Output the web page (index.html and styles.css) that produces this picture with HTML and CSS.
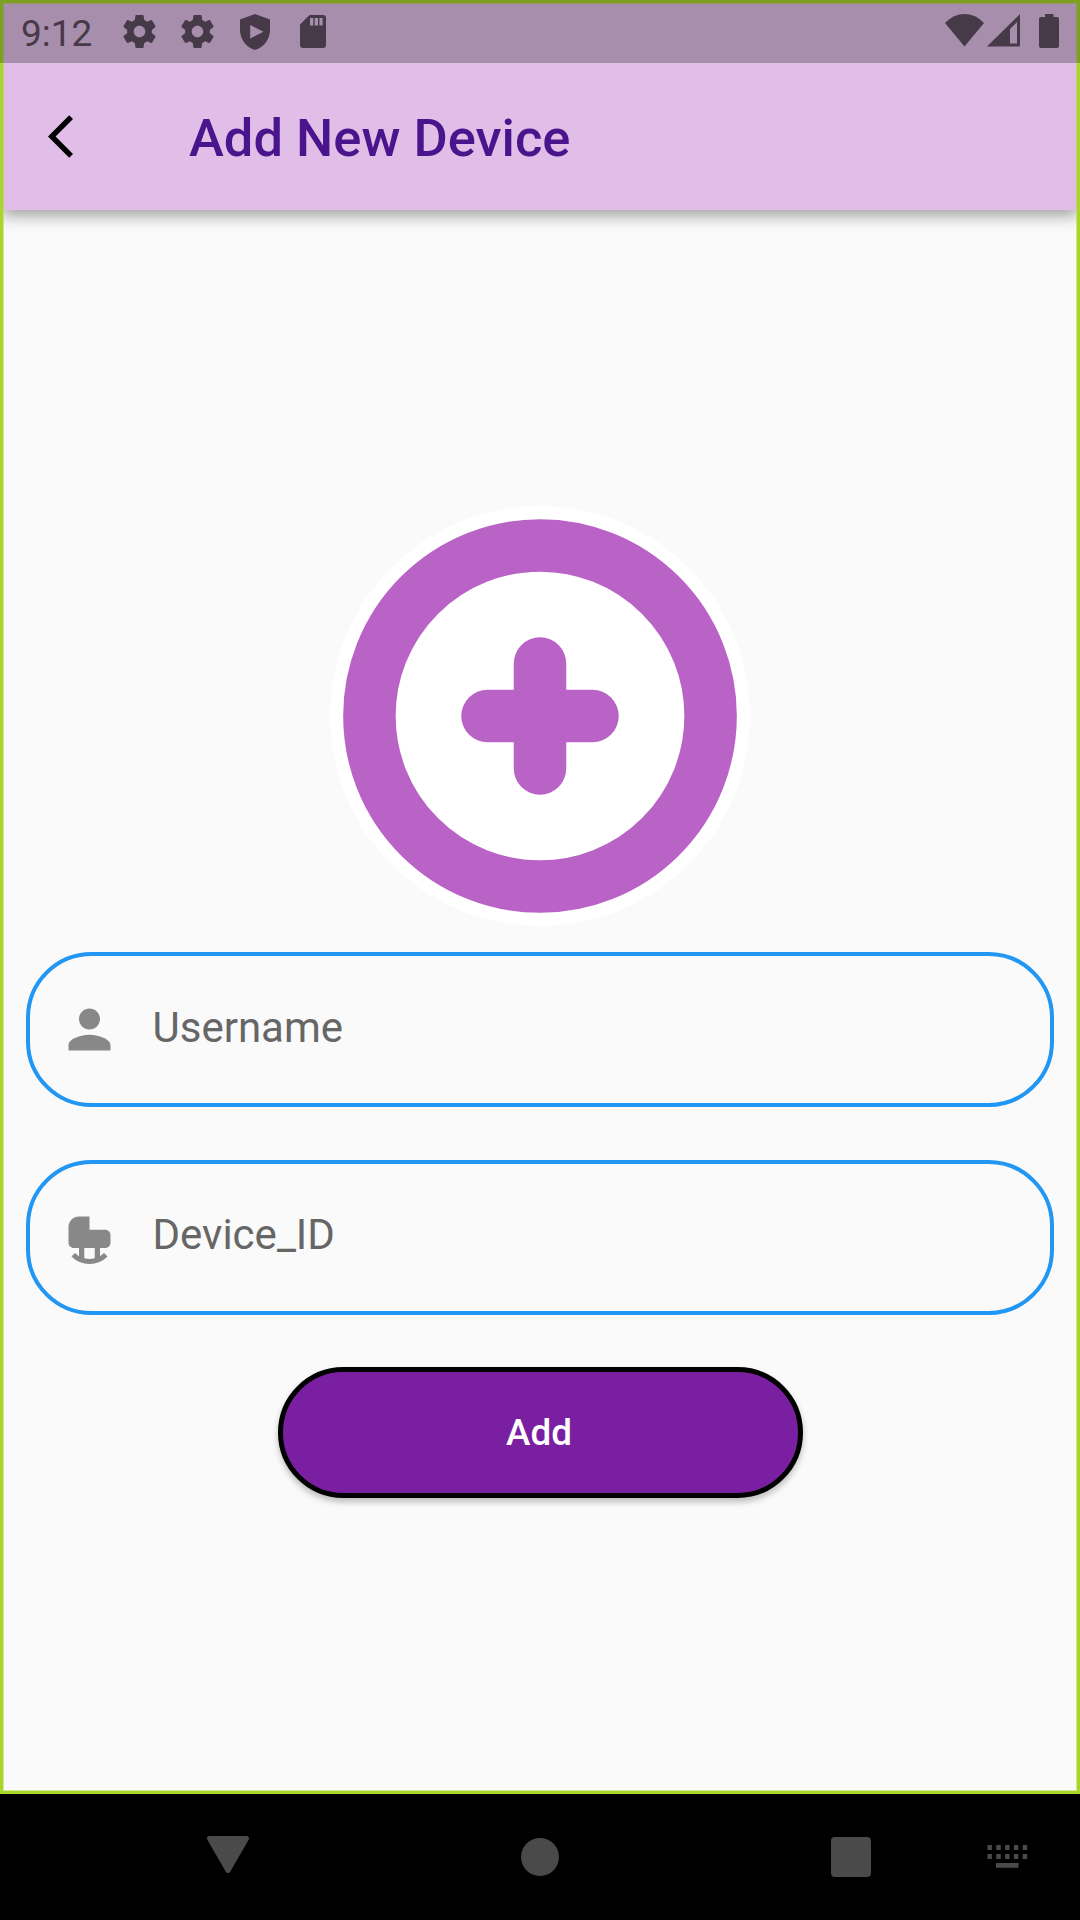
FILE: index.html
```
<!DOCTYPE html>
<html lang="en">
<head>
<meta charset="utf-8">
<title>Add New Device</title>
<link rel="stylesheet" href="styles.css">
</head>
<body>
<div class="screen">
  <div class="app">
    <header class="top">
      <div class="status">
        <span class="clock">9:12</span>
        <div class="notices">
          <svg width="33" height="33" viewBox="2 2 20 20"><path d="M19.43 12.98c.04-.32.07-.64.07-.98s-.03-.66-.07-.98l2.11-1.65c.19-.15.24-.42.12-.64l-2-3.46c-.12-.22-.39-.3-.61-.22l-2.49 1c-.52-.4-1.08-.73-1.69-.98l-.38-2.65C14.46 2.18 14.25 2 14 2h-4c-.25 0-.46.18-.49.42l-.38 2.65c-.61.25-1.17.59-1.69.98l-2.49-1c-.23-.09-.49 0-.61.22l-2 3.46c-.13.22-.07.49.12.64l2.11 1.65c-.04.32-.07.65-.07.98s.03.66.07.98l-2.11 1.65c-.19.15-.24.42-.12.64l2 3.46c.12.22.39.3.61.22l2.49-1c.52.4 1.08.73 1.69.98l.38 2.65c.03.24.24.42.49.42h4c.25 0 .46-.18.49-.42l.38-2.65c.61-.25 1.17-.59 1.69-.98l2.49 1c.23.09.49 0 .61-.22l2-3.46c.12-.22.07-.49-.12-.64l-2.11-1.65zM12 15.5c-1.93 0-3.5-1.57-3.5-3.5s1.57-3.5 3.5-3.5 3.5 1.57 3.5 3.5-1.57 3.5-3.5 3.5z"/></svg>
          <svg width="33" height="33" viewBox="2 2 20 20"><path d="M19.43 12.98c.04-.32.07-.64.07-.98s-.03-.66-.07-.98l2.11-1.65c.19-.15.24-.42.12-.64l-2-3.46c-.12-.22-.39-.3-.61-.22l-2.49 1c-.52-.4-1.08-.73-1.69-.98l-.38-2.65C14.46 2.18 14.25 2 14 2h-4c-.25 0-.46.18-.49.42l-.38 2.65c-.61.25-1.17.59-1.69.98l-2.49-1c-.23-.09-.49 0-.61.22l-2 3.46c-.13.22-.07.49.12.64l2.11 1.65c-.04.32-.07.65-.07.98s.03.66.07.98l-2.11 1.65c-.19.15-.24.42-.12.64l2 3.46c.12.22.39.3.61.22l2.49-1c.52.4 1.08.73 1.69.98l.38 2.65c.03.24.24.42.49.42h4c.25 0 .46-.18.49-.42l.38-2.65c.61-.25 1.17-.59 1.69-.98l2.49 1c.23.09.49 0 .61-.22l2-3.46c.12-.22.07-.49-.12-.64l-2.11-1.65zM12 15.5c-1.93 0-3.5-1.57-3.5-3.5s1.57-3.5 3.5-3.5 3.5 1.57 3.5 3.5-1.57 3.5-3.5 3.5z"/></svg>
          <svg width="30" height="36" viewBox="0 0 30 36"><path fill-rule="evenodd" d="M15 0 30 5.500V16C30 25 24 33.500 15 36 6 33.500 0 25 0 16V5.500zM10.200 11v13.500L23.500 17.700z"/></svg>
          <svg width="26" height="33" viewBox="0 0 26 33"><path fill-rule="evenodd" d="M9.500 0H23a3 3 0 0 1 3 3v27a3 3 0 0 1-3 3H3a3 3 0 0 1-3-3V9.500zM10 3v7.500h3.300V3zM14.700 3v7.500H18V3zM19.400 3v7.500h3.200V3z"/></svg>
        </div>
        <div class="signals">
          <svg width="39" height="33" viewBox="0 0 39 33"><path d="M0 9Q8.500 0 19.500 0T39 9L19.500 32.500z"/></svg>
          <svg class="cell" width="33" height="33" viewBox="0 0 33 33"><path fill-rule="evenodd" d="M33 0V32.500H0zM30 8 23 15V29.500h7z"/></svg>
          <svg class="battery" width="20" height="34" viewBox="0 0 20 34"><path d="M6 0h8.500v3H18a2 2 0 0 1 2 2v27a2 2 0 0 1-2 2H2a2 2 0 0 1-2-2V5a2 2 0 0 1 2-2h4z"/></svg>
        </div>
      </div>
      <div class="bar">
        <svg class="back" width="25" height="43" viewBox="0 2.1 11.67 19.8"><path d="M11.670 3.870 9.900 2.100 0 12l9.900 9.900 1.770-1.770L3.540 12z"/></svg>
        <h1 class="title">Add New Device</h1>
      </div>
    </header>
    <main class="content">
      <svg class="hero" width="420" height="420" viewBox="0 0 420 420">
        <circle cx="210" cy="210" r="210" fill="#fff"/>
        <circle cx="210" cy="210" r="170.600" fill="none" stroke="#b963c6" stroke-width="52.500"/>
        <path d="M210 157.500v105M157.500 210h105" stroke="#b963c6" stroke-width="52.500" stroke-linecap="round"/>
      </svg>
      <div class="field">
        <svg width="63" height="63" viewBox="0 0 24 24"><path d="M12 12c2.210 0 4-1.790 4-4s-1.790-4-4-4-4 1.790-4 4 1.790 4 4 4zm0 2c-2.670 0-8 1.340-8 4v2h16v-2c0-2.660-5.330-4-8-4z"/></svg>
        <span class="label">Username</span>
      </div>
      <div class="field">
        <svg width="63" height="63" viewBox="0 0 24 24"><path d="M12 9V4H8C5.790 4 4 5.790 4 8v6c0 1.100.9 2 2 2h2v4h2v-4h4v4h2v-4h2c1.100 0 2-.9 2-2v-3c0-1.100-.9-2-2-2z"/><path d="M5.800 18.600A8.800 8.800 0 0 0 18.200 18.600" fill="none" stroke="#888" stroke-width="1.900"/></svg>
        <span class="label">Device_ID</span>
      </div>
      <button class="add">Add</button>
    </main>
    <div class="frame"></div>
    <div class="scrim"></div>
  </div>
  <nav class="nav">
    <svg class="down" width="42" height="37" viewBox="0 0 42 37"><path d="M2.500 2.500h37L21 34.500z" stroke="#4a4a4a" stroke-width="5" stroke-linejoin="round"/></svg>
    <svg width="38" height="38" viewBox="0 0 38 38"><circle cx="19" cy="19" r="19"/></svg>
    <svg width="40" height="40" viewBox="0 0 40 40"><rect width="40" height="40" rx="4"/></svg>
    <svg class="keys" width="41" height="24" viewBox="0 0 41 24"><path d="M.5 0h4.400v5H.5zM9.300 0h4.400v5H9.300zM18.100 0h4.400v5h-4.400zM26.900 0h4.400v5h-4.400zM35.700 0h4.400v5h-4.400zM.5 9h4.400v5H.5zM9.300 9h4.400v5H9.300zM18.100 9h4.400v5h-4.400zM26.900 9h4.400v5h-4.400zM35.700 9h4.400v5h-4.400zM9 18h22.500v4.800H9z"/></svg>
  </nav>
</div>
</body>
</html>
```
FILE: styles.css
```
* { box-sizing: border-box; }
body {
  margin: 0;
  font-family: Roboto, sans-serif;
}
svg { display: block; flex: none; }
.screen {
  width: 1080px;
  height: 1920px;
  display: flex;
  flex-direction: column;
  background: #000;
}
.app {
  position: relative;
  height: 1794px;
  display: flex;
  flex-direction: column;
  background: #fafafa;
  overflow: hidden;
}
.top {
  height: 210px;
  background: #e1bee7;
  box-shadow: 0 8px 13px -2px rgba(0, 0, 0, .24), 0 4px 20px -2px rgba(0, 0, 0, .18);
}
.status {
  position: relative;
  z-index: 2;
  height: 63px;
  display: flex;
  padding: 0 21px 0 21px;
  color: #473a48;
  fill: #473a48;
}
.clock {
  width: 89px;
  padding-top: 12px;
  font-size: 37px;
  line-height: 44px;
}
.notices {
  display: grid;
  grid-template-columns: repeat(4, 58px);
  justify-items: center;
  align-items: center;
}
.signals {
  margin-left: auto;
  padding-top: 14px;
  display: flex;
}
.cell { margin-left: 3px; }
.battery { margin-left: 19px; }
.bar {
  height: 147px;
  display: flex;
  align-items: center;
  padding-left: 48px;
}
.title {
  margin: 2px 0 0 116px;
  color: #4a148c;
  font-size: 52.5px;
  font-weight: 500;
  line-height: 62px;
}
.content {
  flex: 1;
  display: flex;
  flex-direction: column;
  align-items: center;
  padding: 296px 26px 0;
}
.hero { margin-bottom: 26px; }
.field {
  width: 1028px;
  height: 155px;
  margin-bottom: 53px;
  display: flex;
  align-items: center;
  padding-left: 27.5px;
  border: 4px solid #2196f3;
  border-radius: 65.6px;
  fill: #888;
}
.field + .field { margin-bottom: 52px; }
.label {
  margin: -4px 0 0 32px;
  color: #666;
  font-size: 42px;
  line-height: 50px;
}
.field + .field .label { margin-top: -6px; }
.add {
  width: 525px;
  height: 131px;
  padding: 0 2px 0 0;
  border: 5px solid #000;
  border-radius: 65.5px;
  background: #7b1fa2;
  box-shadow: 0 4px 6px rgba(0, 0, 0, .25);
  color: #fff;
  font: 500 36.75px/43px Roboto, sans-serif;
}
.frame {
  position: absolute;
  inset: 0;
  border: 3px solid #a9d62b;
  box-shadow: inset 0 0 0 1px rgba(169, 214, 43, .5);
}
.scrim {
  position: absolute;
  inset: 0 0 auto;
  height: 63px;
  background: rgba(0, 0, 0, .25);
}
.nav {
  flex: 1;
  display: flex;
  align-items: center;
  gap: 272px;
  padding-left: 207px;
  fill: #4a4a4a;
}
.down { margin-bottom: 5px; }
.keys { margin-left: -156px; }
```
